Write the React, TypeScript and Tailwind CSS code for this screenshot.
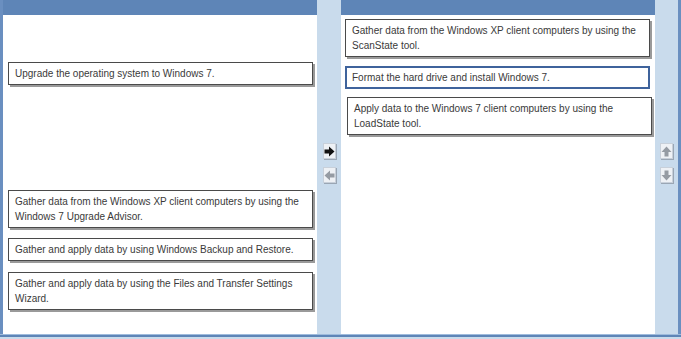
import React from "react";

const Card = ({ text, className = "", selected = false }: { text: string; className?: string; selected?: boolean }) => (
  <div
    className={
      selected
        ? `border-2 border-[#3f639c] bg-white px-[5px] py-[2px] leading-[15px] ${className}`
        : `border border-[#4a4a4a] bg-white px-[6px] py-[3px] leading-[15px] shadow-[2px_2px_0_#9a9a9a] ${className}`
    }
  >
    {text}
  </div>
);

const ArrowBtn = ({ dir, active = false }: { dir: "right" | "left" | "up" | "down"; active?: boolean }) => {
  const rot = { right: 0, left: 180, up: -90, down: 90 }[dir];
  return (
    <div className="flex h-[16px] w-[13px] items-center justify-center border border-[#c8d0da] bg-[#eef1f5] shadow-[1px_1px_0_#9aa6b4]">
      <svg width="11" height="11" viewBox="0 0 11 11" style={{ transform: `rotate(${rot}deg)` }}>
        <path d="M0.5 3.5h4.5V0.5l5.5 5-5.5 5v-3H0.5z" fill={active ? "#111" : "#959ba3"} />
      </svg>
    </div>
  );
};

const left = [
  "Gather data from the Windows XP client computers by using the Windows 7 Upgrade Advisor.",
  "Gather and apply data by using Windows Backup and Restore.",
  "Gather and apply data by using the Files and Transfer Settings Wizard.",
];

export default function App() {
  return (
    <div
      className="flex h-[339px] w-[681px] flex-col bg-[#c9dbec] text-[10px] text-[#3a3a3a]"
      style={{ fontFamily: '"Liberation Sans", Arial, sans-serif' }}
    >
      <div className="flex h-[334px] border-l-[3px] border-r-[3px] border-[#6a8fc0]">
        {/* left list */}
        <div className="flex w-[314px] flex-col bg-white">
          <div className="h-[15px] bg-[#5e85b7]" />
          <div className="flex flex-col pl-[5px] pr-[4px]">
            <Card text="Upgrade the operating system to Windows 7." className="mt-[47px]" />
            <Card text={left[0]} className="mt-[105px]" />
            <Card text={left[1]} className="mt-[10px]" />
            <Card text={left[2]} className="mt-[11px]" />
          </div>
        </div>

        {/* move buttons */}
        <div className="flex w-[24px] flex-col items-center gap-[8px] pt-[143px]">
          <ArrowBtn dir="right" active />
          <ArrowBtn dir="left" />
        </div>

        {/* right list */}
        <div className="flex w-[314px] flex-col bg-white">
          <div className="h-[15px] bg-[#5e85b7]" />
          <div className="flex flex-col pl-[4px] pr-[5px]">
            <Card
              text="Gather data from the Windows XP client computers by using the ScanState tool."
              className="mt-[4px]"
            />
            <Card text="Format the hard drive and install Windows 7." selected className="mt-[9px]" />
            <Card
              text="Apply data to the Windows 7 client computers by using the LoadState tool."
              className="mt-[8px] ml-[2px] -mr-[2px]"
            />
          </div>
        </div>

        {/* order buttons */}
        <div className="flex flex-1 flex-col items-center gap-[8px] pt-[143px]">
          <ArrowBtn dir="up" />
          <ArrowBtn dir="down" />
        </div>
      </div>
      <div className="h-[1px] bg-[#9fbbdc]" />
      <div className="h-[2px] bg-[#5e85b7]" />
    </div>
  );
}
